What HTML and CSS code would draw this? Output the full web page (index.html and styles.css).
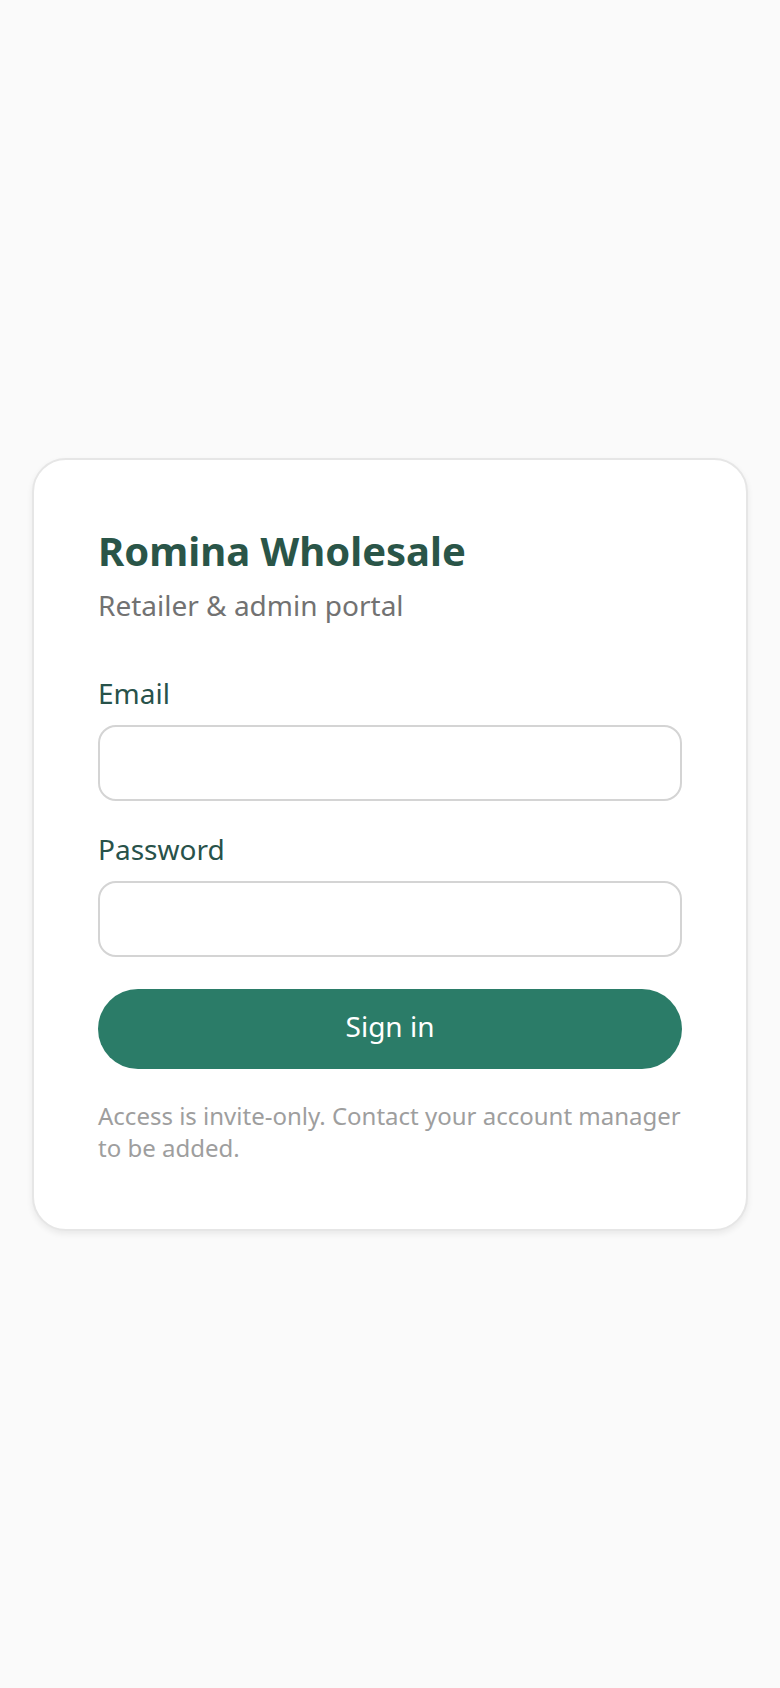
FILE: index.html
```html
<!DOCTYPE html>
<html lang="en">
<head>
  <meta charset="UTF-8">
  <meta name="viewport" content="width=device-width, initial-scale=1.0">
  <title>Romina Wholesale - Sign in</title>
  <link rel="stylesheet" href="styles.css">
</head>
<body>
  <div class="page">
    <div class="login-card">
      <div class="brand">
        <h1 class="brand-title">Romina Wholesale</h1>
        <p class="brand-subtitle">Retailer &amp; admin portal</p>
      </div>

      <form class="login-form" onsubmit="return false;">
        <div class="field">
          <label for="email">Email</label>
          <input type="email" id="email" name="email">
        </div>
        <div class="field">
          <label for="password">Password</label>
          <input type="password" id="password" name="password">
        </div>
        <button type="submit" class="btn-signin">Sign in</button>
      </form>

      <p class="note">Access is invite-only. Contact your account manager to be added.</p>
    </div>
  </div>
</body>
</html>
```

FILE: styles.css
```css
* {
  margin: 0;
  padding: 0;
  box-sizing: border-box;
  font-family: "Noto Sans", "Open Sans", Arial, sans-serif;
}

body {
  background-color: #fafafa;
}

.page {
  min-height: 100vh;
  display: flex;
  align-items: center;
  justify-content: center;
  padding: 0 32px;
}

.login-card {
  width: 100%;
  background-color: #ffffff;
  border: 2px solid #e6e6e6;
  border-radius: 34px;
  box-shadow: 0 3px 6px rgba(0, 0, 0, 0.07);
  padding: 65px 64px 65px;
}

.brand {
  margin-bottom: 48px;
}

.brand-title {
  font-size: 40px;
  line-height: 52px;
  font-weight: 700;
  color: #2a5548;
}

.brand-subtitle {
  margin-top: 8px;
  font-size: 28px;
  line-height: 40px;
  color: #727272;
}

.field {
  margin-bottom: 28px;
}

.field label {
  display: block;
  font-size: 28px;
  line-height: 40px;
  color: #28524a;
  margin-bottom: 12px;
}

.field input {
  display: block;
  width: 100%;
  height: 76px;
  border: 2px solid #d4d4d4;
  border-radius: 18px;
  background-color: #ffffff;
  padding: 0 24px;
  font-size: 28px;
  outline: none;
}

.btn-signin {
  display: block;
  width: 100%;
  height: 80px;
  margin-top: 32px;
  padding-bottom: 6px;
  border: none;
  border-radius: 40px;
  background-color: #2b7c68;
  color: #ffffff;
  font-size: 28px;
  cursor: pointer;
}

.note {
  margin-top: 31px;
  font-size: 24px;
  line-height: 32px;
  color: #9e9e9e;
}
```
